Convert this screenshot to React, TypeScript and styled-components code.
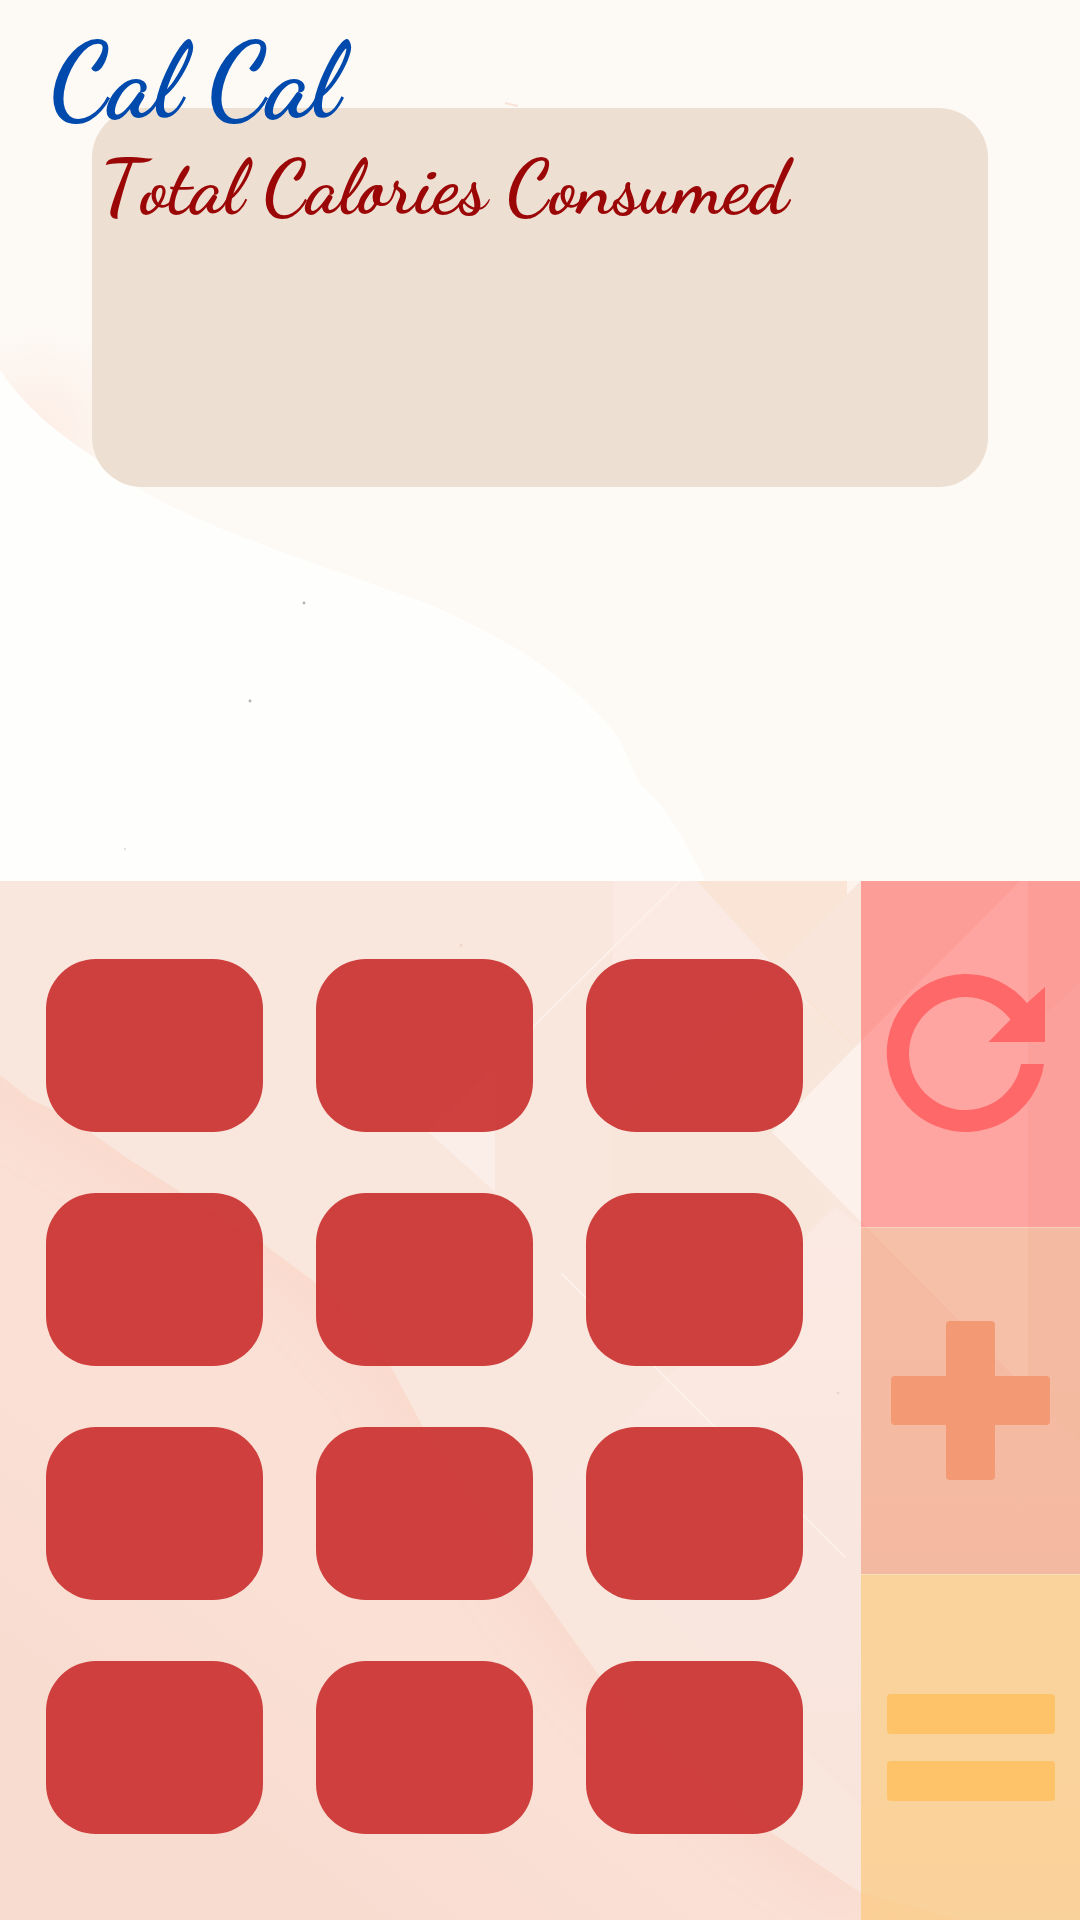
import React from "react";
import styled, { createGlobalStyle } from "styled-components";

const GlobalStyle = createGlobalStyle`
  *, *::before, *::after { box-sizing: border-box; }
  body { margin: 0; background: #fdfaf5; }
`;

const script = `"Dancing Script", "Liberation Serif", cursive`;

const Page = styled.main`
  display: flex;
  flex-direction: column;
  min-height: 100vh;
  font-family: ${script};
  font-kerning: none;
`;

const Backdrop = styled.svg`
  position: absolute;
  inset: 0;
  width: 100%;
  height: 100%;
  z-index: -1;
`;

const Display = styled.header`
  position: relative;
  z-index: 0;
  min-height: 881px;
  padding: 20px 92px 0;
`;

const Title = styled.h1`
  position: relative;
  z-index: 1;
  height: 88px;
  margin: 0 0 0 -42px;
  color: #004aad;
  font-size: 104px;
  font-weight: 700;
  line-height: 124px;
`;

const Total = styled.section`
  min-height: 379px;
  padding: 40px 8px;
  border-radius: 50px;
  background: #eddfd2;
`;

const TotalLabel = styled.h2`
  margin: 0;
  color: #9b0606;
  font-size: 76px;
  font-weight: 700;
  line-height: 80px;
`;

const Keypad = styled.section`
  position: relative;
  z-index: 0;
  flex: 1;
  display: grid;
  grid-template-columns: 1fr 219px;
`;

const Keys = styled.div`
  display: grid;
  grid-template-columns: repeat(3, 1fr);
  grid-auto-rows: 173px;
  gap: 61px 53px;
  padding: 78px 58px 84px 46px;
`;

const Key = styled.button`
  border: 0;
  border-radius: 50px;
  background: rgba(201, 46, 44, 0.9);
  cursor: pointer;
`;

const Actions = styled.div`
  display: grid;
  grid-template-rows: repeat(3, 1fr);
`;

const Action = styled.button<{ $tint: string; $ink: string }>`
  display: flex;
  align-items: center;
  justify-content: center;
  padding: 0;
  border: 0;
  background: ${(p) => p.$tint};
  color: ${(p) => p.$ink};
  cursor: pointer;

  & + & { border-top: 1px solid rgba(255, 255, 255, 0.3); }
`;

const Glyph = styled.svg`
  width: 170px;
  height: 170px;
  fill: currentColor;
`;

const WAVE =
  "M0 370C25 408 58 433 92 456L138 488C165 505 195 517 220 528C265 546 305 560 344 574L427 603C465 620 500 638 530 657C552 671 570 687 585 700C600 715 612 728 620 740L640 784C660 800 678 828 689 850L706 881H0Z";

const WASH =
  "M0 194L30 218L60 232L100 258L130 279L182 312L262 362L316 402C350 435 375 465 390 484L423 546C460 610 495 650 527 694L597 792C640 850 700 905 775 954L861 1012L960 1039H0Z";

function DisplayBackdrop() {
  return (
    <Backdrop viewBox="0 0 1080 881" preserveAspectRatio="none" aria-hidden="true">
      <defs>
        <radialGradient id="blush" gradientUnits="userSpaceOnUse" cx="40" cy="430" r="100">
          <stop offset="0" stopColor="#fdeee6" />
          <stop offset="1" stopColor="#fdeee6" stopOpacity="0" />
        </radialGradient>
      </defs>
      <rect width="1080" height="881" fill="#fdf9f4" />
      <rect width="300" height="600" fill="url(#blush)" />
      <path d={WAVE} fill="#fefefc" />
      <circle cx="304" cy="603" r="1.4" fill="#b5b1ac" />
      <circle cx="250" cy="701" r="1.4" fill="#b5b1ac" />
      <circle cx="125" cy="849" r="1.2" fill="#e4e2de" />
      <path d="M505 103l13 3" stroke="#f9e3d9" strokeWidth="2" />
    </Backdrop>
  );
}

function KeypadBackdrop() {
  return (
    <Backdrop viewBox="0 0 1080 1039" preserveAspectRatio="none" aria-hidden="true">
      <defs>
        <linearGradient id="wash" x1="0.75" y1="0.2" x2="0.2" y2="0.85">
          <stop offset="0" stopColor="#fad9cd" />
          <stop offset="0.3" stopColor="#fbdfd4" />
          <stop offset="0.7" stopColor="#fae0d5" />
          <stop offset="1" stopColor="#f9dcd0" />
        </linearGradient>
        <linearGradient id="pane" x1="0" y1="0" x2="0" y2="1">
          <stop offset="0" stopColor="#fbeae3" />
          <stop offset="1" stopColor="#f7e3da" />
        </linearGradient>
        <clipPath id="washEdge">
          <path d={WASH} />
        </clipPath>
        <filter id="bleed" x="-10%" y="-10%" width="120%" height="120%">
          <feGaussianBlur stdDeviation="20" />
        </filter>
      </defs>
      <rect width="1080" height="1039" fill="#f9e6dc" />
      <path d="M613 0H697L861 172V180L613 428Z" fill="#fbeae3" />
      <path d="M697 0H1080V180H861Z" fill="#f9e4d6" />
      <path d="M613 245L770 90L861 172V180L772 251L835 320L700 460H613Z" fill="#f9e6db" />
      <path d="M847 0H861L847 15Z" fill="#fdf2ec" />
      <path d="M861 0V172L775 85Z" fill="#f9e5d9" />
      <path d="M772 251L861 160L1020 0H1028V510L861 341Z" fill="#fdf1eb" />
      <path d="M1028 150L1080 100V510H1028Z" fill="#f9e9e0" />
      <path d="M495 184V311L427 250Z" fill="#fbeee8" />
      <path d="M835 326L861 344L1028 510L1080 560V1039H861V925L546 619Z" fill="url(#pane)" />
      <path d="M680 0L495 184M561 392L845 676" stroke="#fcf0e9" strokeWidth="2" fill="none" />
      <path d={WASH} fill="url(#wash)" />
      <g clipPath="url(#washEdge)">
        <path
          d="M-20 190L130 279L316 402L390 484L423 546L527 694L597 792L775 954L861 1012"
          fill="none"
          stroke="#f4bfae"
          strokeOpacity="0.16"
          strokeWidth="60"
          filter="url(#bleed)"
        />
      </g>
      <circle cx="461" cy="64" r="1.5" fill="#f0d4c8" />
      <circle cx="838" cy="512" r="1.5" fill="#ecd5cb" />
    </Backdrop>
  );
}

const KEYS = Array.from({ length: 12 }, (_, i) => i + 1);

export default function App() {
  return (
    <Page>
      <GlobalStyle />
      <Display>
        <DisplayBackdrop />
        <Title>Cal Cal</Title>
        <Total>
          <TotalLabel>Total Calories Consumed</TotalLabel>
        </Total>
      </Display>
      <Keypad>
        <KeypadBackdrop />
        <Keys>
          {KEYS.map((n) => (
            <Key key={n} type="button" aria-label={`Key ${n}`} />
          ))}
        </Keys>
        <Actions>
          <Action type="button" aria-label="Reset" $tint="rgba(255, 87, 87, 0.5)" $ink="#ff6868">
            <Glyph viewBox="0 -1 170 170">
              <path d="M141 33A79 79 0 1 0 158 94H135A56.500 56.500 0 1 1 124.500 49.500L102.500 72H159V17Z" />
            </Glyph>
          </Action>
          <Action type="button" aria-label="Add" $tint="rgba(240, 142, 100, 0.5)" $ink="#f39a74">
            <Glyph viewBox="4 -3 170 170">
              <path d="M64 6a4 4 0 0 1 4-4h41a4 4 0 0 1 4 4v51h51a4 4 0 0 1 4 4v41a4 4 0 0 1-4 4h-51v51a4 4 0 0 1-4 4h-41a4 4 0 0 1-4-4v-51H13a4 4 0 0 1-4-4V61a4 4 0 0 1 4-4h51Z" />
            </Glyph>
          </Action>
          <Action type="button" aria-label="Equals" $tint="rgba(252, 192, 90, 0.5)" $ink="#fec268">
            <Glyph viewBox="0 0 170 170">
              <rect x="1" y="32" width="168" height="40" rx="4" />
              <rect x="1" y="99" width="168" height="40" rx="4" />
            </Glyph>
          </Action>
        </Actions>
      </Keypad>
    </Page>
  );
}
